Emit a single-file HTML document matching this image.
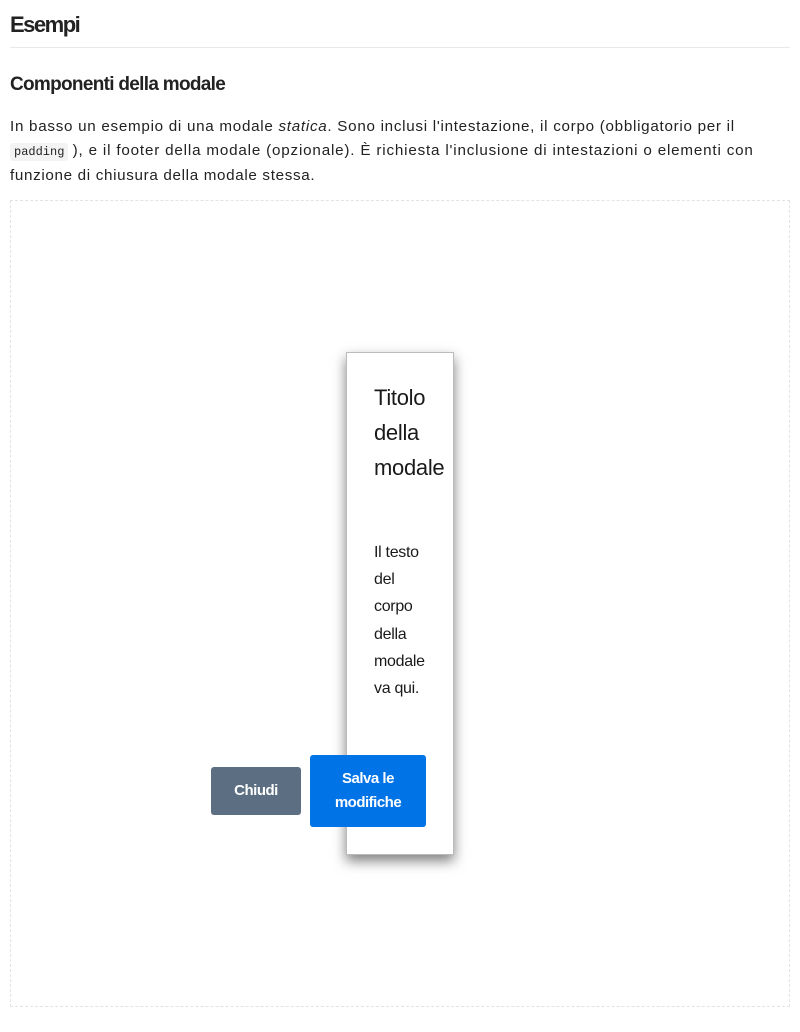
<!DOCTYPE html>
<html><head><meta charset="utf-8"><style>
body{margin:0;width:800px;height:1032px;background:#fff;font-family:"Liberation Sans",sans-serif;color:#1a1a1a;position:relative;overflow:hidden}
h1{position:absolute;left:10px;top:12px;margin:0;font-size:22px;font-weight:bold;letter-spacing:-1.5px;color:#222}
.hr{position:absolute;left:10px;top:47px;width:780px;height:1px;background:#e8e8e8}
h2{position:absolute;left:10px;top:74px;margin:0;font-size:19px;font-weight:bold;letter-spacing:-0.7px;color:#222}
p{position:absolute;left:10px;top:115px;width:790px;margin:0;font-size:15.2px;line-height:24px;color:#222;white-space:nowrap}
code{font-family:"Liberation Mono",monospace;font-size:12px;background:#f3f3f3;padding:2px 4px;border-radius:3px}
.box{position:absolute;left:10px;top:200px;width:778px;height:805px;border:1px dashed #e3e3e3}
.modal{position:absolute;left:346px;top:352px;width:106px;height:501px;border:1px solid #bbb;background:#fff;box-shadow:0 6px 12px rgba(0,0,0,.5)}
.t{position:absolute;left:374px;top:380px;font-size:22px;line-height:35px;color:#1a1a1a;letter-spacing:-0.3px}
.b{position:absolute;left:374px;top:539px;font-size:16px;line-height:27.2px;color:#1a1a1a;letter-spacing:-0.3px}
.btn{position:absolute;color:#fff;font-weight:bold;font-size:15px;text-align:center;border-radius:3px;display:flex;align-items:center;justify-content:center;line-height:24px;letter-spacing:-0.5px}
</style></head><body>
<h1>Esempi</h1>
<div class="hr"></div>
<h2>Componenti della modale</h2>
<p><span style="letter-spacing:0.72px">In basso un esempio di una modale <i>statica</i>. Sono inclusi l'intestazione, il corpo (obbligatorio per il</span><br><code>padding</code> <span style="letter-spacing:0.82px">), e il footer della modale (opzionale). È richiesta l'inclusione di intestazioni o elementi con</span><br><span style="letter-spacing:0.67px">funzione di chiusura della modale stessa.</span></p>
<div class="box"></div>
<div class="modal"></div>
<div class="t">Titolo<br>della<br>modale</div>
<div class="b">Il testo<br>del<br>corpo<br>della<br>modale<br>va qui.</div>
<div class="btn" style="left:211px;top:767px;width:90px;height:48px;background:#5c6f82">Chiudi</div>
<div class="btn" style="left:310px;top:755px;width:116px;height:72px;background:#0073e6">Salva le<br>modifiche</div>
</body></html>
